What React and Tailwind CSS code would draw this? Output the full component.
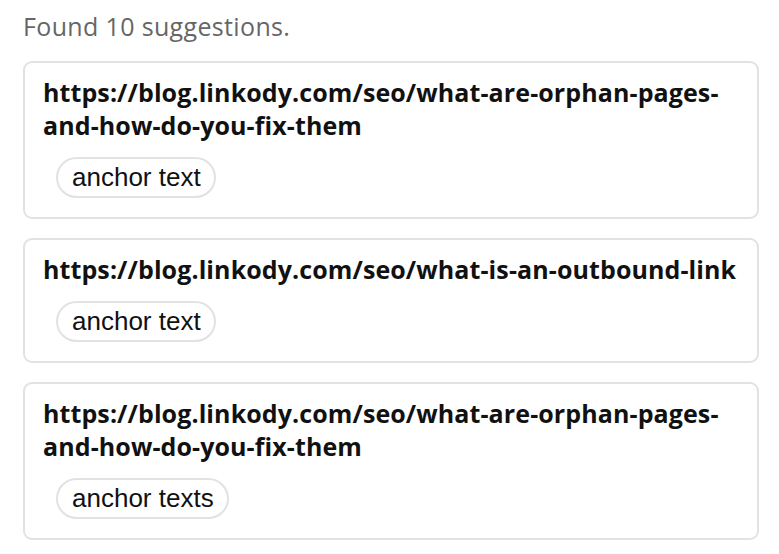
import React from 'react';

const suggestions = [
    { url: 'https://blog.linkody.com/seo/what-are-orphan-pages-and-how-do-you-fix-them', anchor: 'anchor text' },
    { url: 'https://blog.linkody.com/seo/what-is-an-outbound-link', anchor: 'anchor text' },
    { url: 'https://blog.linkody.com/seo/what-are-orphan-pages-and-how-do-you-fix-them', anchor: 'anchor texts' },
];

function SuggestionCard({ url, anchor }) {
    return (
        <div className="rounded-[9px] border-2 border-[#e2e2e2] bg-white px-[18px] pt-[13px] pb-[19px]">
            <div className="text-[25px] font-bold leading-[33px] tracking-[0.1px] text-[#111] [font-family:'Open_Sans',sans-serif]">
                {url}
            </div>
            <div className="mt-[15px] pl-[13px]">
                <span className="inline-flex h-[41px] items-center rounded-full border-2 border-[#e2e2e2] pl-[14px] pr-[13px] text-[26px] text-[#111] [font-family:'Liberation_Sans',Arial,sans-serif]">
                    {anchor}
                </span>
            </div>
        </div>
    );
}

export default function App() {
    return (
        <div className="min-h-screen bg-white pl-[23px] pr-[20px] pt-[10px]">
            <p className="text-[25px] leading-[32px] tracking-[0.35px] text-[#666] [font-family:'Open_Sans',sans-serif]">Found 10 suggestions.</p>
            <div className="mt-[19px] flex flex-col gap-[19px]">
                {suggestions.map((s, i) => (
                    <SuggestionCard key={i} url={s.url} anchor={s.anchor} />
                ))}
            </div>
        </div>
    );
}
